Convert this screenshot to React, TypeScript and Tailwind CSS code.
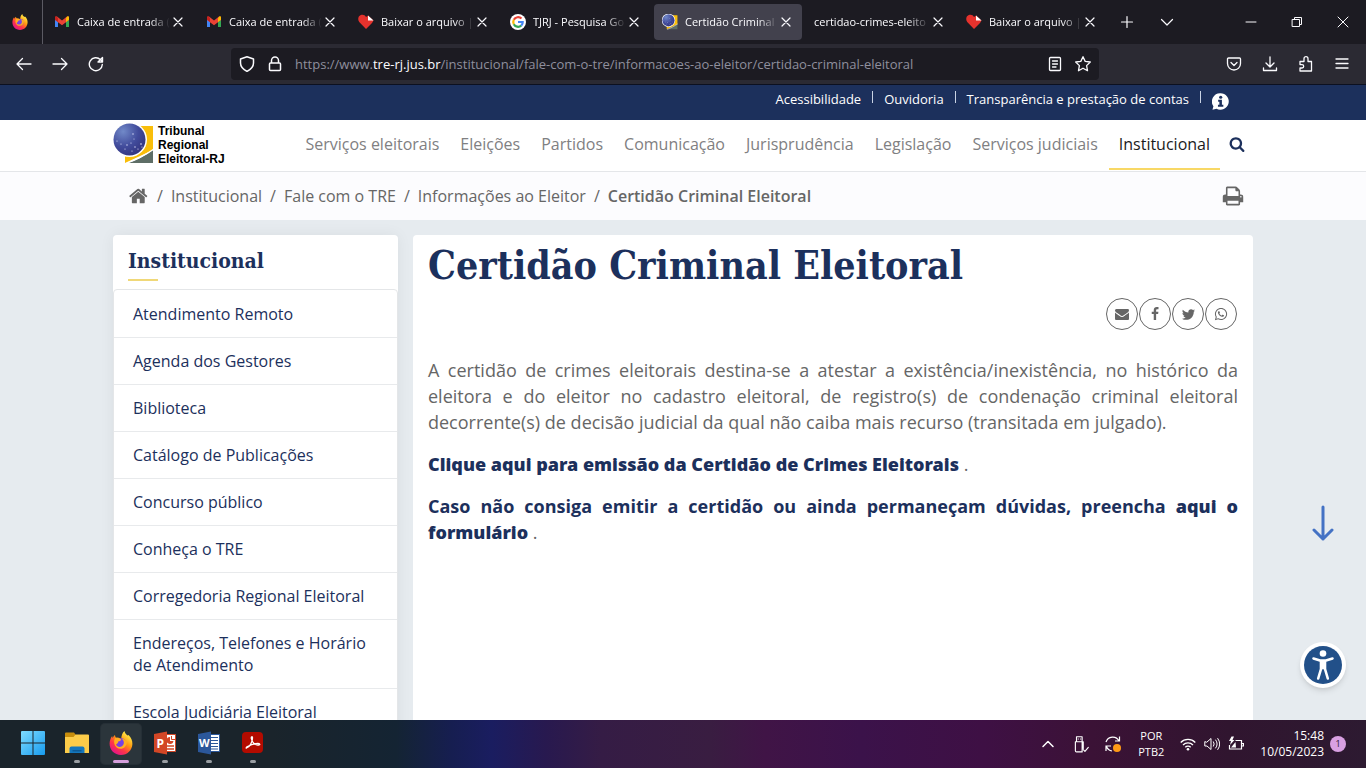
import React from "react";
import { FaWhatsapp } from "react-icons/fa";

const gmail = (
  <svg viewBox="0 0 16 12" className="h-3 w-4 shrink-0">
    <path d="M1 2v9h3V5z" fill="#4285f4" />
    <path d="M12 5v6h3V2z" fill="#34a853" />
    <path d="M1 1v3l7 5.2L15 4V1l-2-.4L8 4.6 3 .6z" fill="#ea4335" />
    <path d="M12 2.2V6l3-2.2V1.4C15 .4 13.800 0 13 .8z" fill="#fbbc04" />
    <path d="M4 2.200V6L1 3.800V1.400C1 .4 2.200 0 3 .8z" fill="#c5221f" />
  </svg>
);
const heart = (
  <svg viewBox="0 0 16 16" className="h-4 w-4 shrink-0">
    <path d="M8 15 1.200 8C-.5 5.500 0 2 2.800 1 5 .2 7 1 8 3l2-1.500 5.500 5L14 9z" fill="#e5322d" />
    <path d="M10 1.500v5h5.500z" fill="#fff" />
  </svg>
);
const google = (
  <svg viewBox="0 0 16 16" className="h-4 w-4 shrink-0">
    <circle cx="8" cy="8" r="8" fill="#fff" />
    <g fill="none" strokeWidth="2.200">
      <path d="M11.500 4.600A4.800 4.800 0 0 0 3.800 5.800" stroke="#ea4335" />
      <path d="M3.800 5.800a4.800 4.800 0 0 0 0 4.400" stroke="#fbbc04" />
      <path d="M3.800 10.200a4.800 4.800 0 0 0 7.400 1.400" stroke="#34a853" />
      <path d="M11.200 11.600A4.500 4.500 0 0 0 12.700 8H8" stroke="#4285f4" />
    </g>
  </svg>
);

function CourtMark({ className }: { className: string }) {
  return (
    <svg viewBox="0 0 41 42" className={className}>
      <defs>
        <radialGradient id="globe" cx=".3" cy=".25" r=".8">
          <stop offset="0" stopColor="#7189c8" />
          <stop offset=".6" stopColor="#414b9b" />
          <stop offset="1" stopColor="#343681" />
        </radialGradient>
      </defs>
      <path d="M12 3h28v24L12 40z" fill="#f9be0a" />
      <path d="M40 27v13H15q13-4 25-13z" fill="#5e6e66" />
      <path d="M13 40.500Q28 35 41 26" stroke="#fff" strokeWidth="1.300" fill="none" />
      <circle cx="16.500" cy="16.500" r="17.500" fill="#fff" />
      <circle cx="16.500" cy="16.500" r="16" fill="url(#globe)" />
      <g fill="#dfe4ff">
        <circle cx="20" cy="11" r=".7" /><circle cx="8" cy="21" r=".6" /><circle cx="14" cy="22" r=".7" />
        <circle cx="18" cy="20" r=".6" /><circle cx="22" cy="24" r=".7" /><circle cx="28" cy="21" r=".8" />
        <circle cx="25" cy="26" r=".6" /><circle cx="12" cy="26" r=".6" /><circle cx="19" cy="28" r=".6" />
        <circle cx="29" cy="24" r=".6" /><circle cx="4" cy="18" r=".6" /><circle cx="21" cy="16" r=".5" />
      </g>
    </svg>
  );
}

function Firefox({ className, id }: { className: string; id: string }) {
  return (
    <svg viewBox="0 0 24 24" className={className}>
      <defs>
        <linearGradient id={id} x1=".85" y1=".1" x2=".25" y2=".95">
          <stop offset="0" stopColor="#fff44f" />
          <stop offset=".4" stopColor="#ff980e" />
          <stop offset=".7" stopColor="#ff3647" />
          <stop offset="1" stopColor="#e31587" />
        </linearGradient>
      </defs>
      <path d="M15.500 0c.2 2 1.500 3.200 3 4.500l1-.6c2.700 2.500 4 5.700 3.900 9C23.200 19 18.300 24 12 24 5.500 24 .5 19 .6 12.500.7 9.500 1.600 7 3.200 5c0 .8.200 1.400.5 2C4.300 5.500 5.200 4.500 6 4c0 1 .5 2.200 1.200 2.800 2-.3 4 .2 5 1.200.2-3.200 1-6.200 3.300-8z" fill={`url(#${id})`} />
      <circle cx="12.200" cy="12.200" r="5" fill="#7542e5" />
      <path d="M6 7c2-.6 4.600-.1 6.200 1.400-.3 1.200-1.300 1.700-2.800 1.900-.3 1.800-1.200 2.600-2.600 3.200C8 16 11 16.500 13 15.200c3-2 2-6-.2-7.400 2.400.2 4.200 1.400 5.200 3.200-.2 4-3 7-7 6.800C6.500 17.500 3.600 12 6 7z" fill="#ffae1e" />
    </svg>
  );
}

type Tab = { title: string; icon?: React.ReactNode; active?: boolean };
const tabs: Tab[] = [
  { title: "Caixa de entrada (", icon: gmail },
  { title: "Caixa de entrada (", icon: gmail },
  { title: "Baixar o arquivo | i", icon: heart },
  { title: "TJRJ - Pesquisa Go", icon: google },
  { title: "Certidão Criminal", icon: <CourtMark className="h-4 w-4 shrink-0" />, active: true },
  { title: "certidao-crimes-eleito" },
  { title: "Baixar o arquivo | i", icon: heart },
];

function Line({ d, className = "h-4 w-4", width = 1.5 }: { d: string; className?: string; width?: number }) {
  return (
    <svg viewBox="0 0 16 16" className={className} fill="none" stroke="currentColor" strokeWidth={width} strokeLinecap="round" strokeLinejoin="round">
      <path d={d} />
    </svg>
  );
}

function Solid({ d, className }: { d: string; className: string }) {
  return (
    <svg viewBox="0 0 1792 1792" className={className} fill="currentColor">
      <path d={d} />
    </svg>
  );
}

const glyphs = {
  home: "M1408 992v480q0 26-19 45t-45 19h-384v-384h-256v384h-384q-26 0-45-19t-19-45v-480q0-1 .5-3t.5-3l575-474 575 474q1 2 1 6zm223-69l-62 74q-8 9-21 11h-3q-13 0-21-7l-692-577-692 577q-12 8-24 7-13-2-21-11l-62-74q-8-10-7-23.500t11-21.500l719-599q32-26 76-26t76 26l244 204v-195q0-14 9-23t23-9h192q14 0 23 9t9 23v408l219 182q10 8 11 21.500t-7 23.500z",
  print: "M448 1536h896v-256h-896v256zm0-640h896v-384h-160q-40 0-68-28t-28-68v-160h-640v640zm1152 64q0-26-19-45t-45-19-45 19-19 45 19 45 45 19 45-19 19-45zm128 0v416q0 13-9.500 22.500t-22.500 9.500h-224v160q0 40-28 68t-68 28h-960q-40 0-68-28t-28-68v-160h-224q-13 0-22.500-9.500t-9.500-22.500v-416q0-79 56.500-135.500t135.500-56.500h64v-544q0-40 28-68t68-28h672q40 0 88 20t76 48l152 152q28 28 48 76t20 88v256h64q79 0 135.500 56.500t56.500 135.500z",
  search: "M1216 832q0-185-131.500-316.500t-316.500-131.500-316.500 131.500-131.500 316.500 131.500 316.500 316.500 131.500 316.500-131.500 131.500-316.500zm512 832q0 52-38 90t-90 38q-54 0-90-38l-343-342q-179 124-399 124-143 0-273.500-55.500t-225-150-150-225-55.500-273.500 55.500-273.500 150-225 225-150 273.500-55.500 273.500 55.500 225 150 150 225 55.500 273.500q0 220-124 399l343 343q37 37 37 90z",
  facebook: "M1343 12v264h-157q-86 0-116 36t-30 108v189h293l-39 296h-254v759h-306v-759h-255v-296h255v-218q0-186 104-288.500t277-102.500q147 0 228 12z",
  twitter: "M1684 408q-67 98-162 167 1 14 1 42 0 130-38 259.500t-115.500 248.500-184.500 210.500-258 146-323 54.500q-271 0-496-145 35 4 78 4 225 0 401-138-105-2-188-64.500t-114-159.500q33 5 61 5 43 0 85-11-112-23-185.500-111.500t-73.500-205.500v-4q68 38 146 41-66-44-105-115t-39-154q0-88 44-163 121 149 294.500 238.500t371.500 99.500q-8-38-8-74 0-134 94.500-228.500t228.500-94.500q140 0 236 102 109-21 205-78-37 115-142 178 93-10 186-50z",
  envelope: "M1792 710v794q0 66-47 113t-113 47h-1472q-66 0-113-47t-47-113v-794q44 49 101 87 362 246 497 345 57 42 92.500 65.500t94.500 48 110 24.500h2q51 0 110-24.500t94.500-48 92.500-65.500q170-123 498-345 57-39 100-87zm0-294q0 79-49 151t-122 123q-376 261-468 325-10 7-42.500 31t-54 38.500-52 32.500-57.500 27-50 9h-2q-23 0-50-9t-57.500-27-52-32.500-54-38.500-42.500-31q-91-64-262-182.500t-205-142.500q-62-42-117-115.500t-55-136.500q0-78 41.500-130t118.500-52h1472q65 0 112.500 47t47.500 113z",
};

function Browser() {
  return (
    <header className="shrink-0 bg-[#2b2a33] font-['Open_Sans',sans-serif] text-[#fbfbfe]">
      <div className="flex h-11 items-center bg-[#1c1b22]">
        <div className="flex h-full w-[43px] items-center justify-center border-r border-[#5b5a63] pr-0.5">
          <Firefox className="h-4 w-4" id="firefoxTab" />
        </div>
        <div role="tablist" className="flex gap-1 pl-[3px]">
          {tabs.map((t, i) => (
            <div key={i} role="tab" aria-selected={!!t.active} className={`flex h-9 w-[148px] items-center rounded pr-2 pl-2 ${t.active ? "bg-[#42414d]" : ""}`}>
              {t.icon}
              <span className={`min-w-0 flex-1 text-[11px] whitespace-nowrap mask-r-from-80% ${t.icon ? "pl-[7px]" : ""}`}>{t.title}</span>
              <button aria-label="Fechar aba">
                <svg viewBox="0 0 12 12" className="h-3 w-4" fill="none" stroke="currentColor" strokeWidth="1.200" strokeLinecap="round"><path d="M2 2l8 8M10 2l-8 8" /></svg>
              </button>
            </div>
          ))}
        </div>
        <div className="flex gap-6 pl-[13px]">
          <button aria-label="Nova aba"><Line d="M8 2.500v11M2.500 8h11" width={1.2} /></button>
          <button aria-label="Listar abas"><Line d="M2.500 5.500 8 11l5.500-5.500" width={1.2} /></button>
        </div>
        <div className="ml-auto flex gap-[30px] pr-[15px]">
          <button aria-label="Minimizar"><Line d="M3 8h10" width={1} /></button>
          <button aria-label="Restaurar"><Line d="M3.500 5.500h7v7h-7zM5.500 5V3.500h7v7H11" width={1} /></button>
          <button aria-label="Fechar"><Line d="M3 3l10 10M13 3 3 13" width={1} /></button>
        </div>
      </div>
      <div className="flex h-10 items-center">
        <div className="flex w-[231px] shrink-0 gap-5 pl-4">
          <button aria-label="Voltar"><Line d="M15 8H1M6.500 2.500 1 8l5.500 5.500" width={1.3} /></button>
          <button aria-label="Avançar"><Line d="M1 8h14M9.500 2.500 15 8l-5.500 5.500" width={1.3} /></button>
          <button aria-label="Recarregar"><Line d="M14.300 8.500A6.500 6.500 0 1 1 12.500 3.700L14 5M14.500 1.500V6H10z" width={1.4} /></button>
        </div>
        <div className="mr-[127px] flex h-8 flex-1 items-center gap-3 rounded bg-[#1c1b22] px-2">
          <Line d="M8 .8 14.500 3v4c0 4-3 6.600-6.500 8.400C4.500 13.600 1.500 11 1.500 7V3z" />
          <Line d="M3.500 7h9a1 1 0 0 1 1 1v5.500a1 1 0 0 1-1 1h-9a1 1 0 0 1-1-1V8a1 1 0 0 1 1-1zM4.500 7V4.500a3.500 3.500 0 0 1 7 0V7" />
          <div className="flex-1 pt-0.5 text-[13px] whitespace-nowrap text-[#8f8f9d]">
            https://www.<span className="text-[#fbfbfe]">tre-rj.jus.br</span>/institucional/fale-com-o-tre/informacoes-ao-eleitor/certidao-criminal-eleitoral
          </div>
          <button aria-label="Modo de leitura"><Line d="M3.500 1.500h9a1 1 0 0 1 1 1v11a1 1 0 0 1-1 1h-9a1 1 0 0 1-1-1v-11a1 1 0 0 1 1-1zM5.500 5h5M5.500 8h5M5.500 11H9" width={1.3} /></button>
          <button aria-label="Favoritar"><Line d="m8 .7 2.200 4.700 5.100.6-3.700 3.600.9 5.100L8 12.200l-4.500 2.500.9-5.100L.7 6l5.100-.6z" width={1.3} /></button>
        </div>
        <div className="flex gap-5 pr-4">
          <button aria-label="Pocket"><Line d="M2.500 2h11a1 1 0 0 1 1 1v4.500a6.500 6.500 0 0 1-13 0V3a1 1 0 0 1 1-1zM5 6.500l3 3 3-3" width={1.3} /></button>
          <button aria-label="Downloads"><Line d="M8 .8V11M4 7l4 4 4-4M1.500 12v2.500h13V12" width={1.3} /></button>
          <button aria-label="Extensões"><Line d="M2 5.500h4V2.700a2 2 0 0 1 4 0v2.800h3.500v9.500H2v-3h2a1.700 1.700 0 0 0 0-3.400H2z" width={1.3} /></button>
          <button aria-label="Menu"><Line d="M2 3h12M2 7.500h12M2 12h12" width={1.3} /></button>
        </div>
      </div>
    </header>
  );
}

const menu = ["Serviços eleitorais", "Eleições", "Partidos", "Comunicação", "Jurisprudência", "Legislação", "Serviços judiciais"];
const crumbs = ["Institucional", "Fale com o TRE", "Informações ao Eleitor"];
const side = ["Atendimento Remoto", "Agenda dos Gestores", "Biblioteca", "Catálogo de Publicações", "Concurso público", "Conheça o TRE", "Corregedoria Regional Eleitoral", "Endereços, Telefones e Horário de Atendimento", "Escola Judiciária Eleitoral"];

function Share({ label, children }: { label: string; children: React.ReactNode }) {
  return (
    <a href="#" aria-label={label} className="flex h-8 w-8 items-center justify-center rounded-full border border-[#666]">{children}</a>
  );
}

function Site() {
  return (
    <div className="relative flex min-h-0 flex-1 flex-col overflow-hidden bg-[#e6ebef] font-['Open_Sans',sans-serif] text-[#666]">
      <div className="h-9 shrink-0 border-t border-[#0c1020] bg-[#1c305c] text-[13px] text-white">
        <div className="mx-auto flex max-w-[1140px] items-start justify-end gap-[11px] pt-1 pr-6 leading-5">
          <a href="#">Acessibilidade</a>
          <span className="mt-0.5 h-3 w-px bg-[#c9d3e4]" />
          <a href="#">Ouvidoria</a>
          <span className="mt-0.5 h-3 w-px bg-[#c9d3e4]" />
          <a href="#">Transparência e prestação de contas</a>
          <span className="mt-0.5 h-3 w-px bg-[#c9d3e4]" />
          <a href="#" aria-label="Acesso à informação" className="pt-1">
            <svg viewBox="0 0 18 18" className="h-[17px] w-[17px]">
              <path d="M9 .3a8.700 8.700 0 1 1-4.200 16.300L.5 17.700 1.500 14A8.700 8.700 0 0 1 9 .3z" fill="#fff" />
              <path d="M6.500 7.200h4v5.300H12v2H6.300v-2h1.500V9.200H6.500z" fill="#1c305c" />
              <circle cx="9.200" cy="4.500" r="1.700" fill="#1c305c" />
            </svg>
          </a>
        </div>
      </div>
      <div className="h-[52px] shrink-0 border-b border-[#e4e6e9] bg-white">
        <div className="mx-auto flex h-full max-w-[1140px] justify-between">
          <a href="#" className="flex items-start gap-1 pt-[3px] font-['Liberation_Sans',sans-serif] text-xs leading-[14px] font-bold text-black">
            <CourtMark className="h-[42px] w-[41px]" />
            <span className="pt-px">Tribunal<br />Regional<br />Eleitoral-RJ</span>
          </a>
          <nav className="flex items-start gap-px text-base leading-6 text-[#7f8082]">
            {menu.map((m) => <a key={m} href="#" className="px-[10px] pt-3">{m}</a>)}
            <a href="#" className="h-[50px] border-b-2 border-[#f8d865] px-[10px] pt-3 text-[#1b1b1b]">Institucional</a>
            <button aria-label="Pesquisar" className="px-2 pt-4 text-[#1c305c]"><Solid d={glyphs.search} className="h-4 w-4" /></button>
          </nav>
        </div>
      </div>
      <div className="h-12 shrink-0 bg-[#fcfcfe]">
        <div className="mx-auto flex h-full max-w-[1140px] items-center justify-between px-[9px]">
          <nav className="flex items-center gap-2 pl-[7px] text-base">
            <a href="#" aria-label="Início"><Solid d={glyphs.home} className="h-5 w-5" /></a>
            {crumbs.map((c) => <React.Fragment key={c}><span>/</span><a href="#">{c}</a></React.Fragment>)}
            <span>/</span>
            <span className="font-semibold">Certidão Criminal Eleitoral</span>
          </nav>
          <button aria-label="Imprimir"><Solid d={glyphs.print} className="h-[22px] w-[22px]" /></button>
        </div>
      </div>
      <div className="mx-auto flex w-full max-w-[1140px] flex-1 gap-[15px] pt-[15px]">
        <aside className="w-[285px] shrink-0 rounded-t bg-white text-[#1c305c] shadow-[0_0_15px_rgba(0,0,0,0.06)]">
          <div className="h-[54px] px-[15px] pt-2">
            <h2 className="font-['DejaVu_Serif_Condensed','DejaVu_Serif',serif] text-[21px] leading-9 font-bold">Institucional</h2>
            <span className="block h-0.5 w-[30px] bg-[#f0d878]" />
          </div>
          <ul className="rounded-t border border-[#e4e6e8] pt-px">
            {side.map((s) => (
              <li key={s} className="border-b border-[#e8eaec] px-[19px] py-3 text-base leading-[22px] last:border-0">
                <a href="#">{s}</a>
              </li>
            ))}
          </ul>
        </aside>
        <main className="min-w-0 flex-1 rounded-t bg-white px-[15px] pt-[7px]">
          <h1 className="font-['DejaVu_Serif_Condensed','DejaVu_Serif',serif] text-[39px] leading-[46px] font-bold whitespace-nowrap text-[#1c305c]">Certidão Criminal Eleitoral</h1>
          <div className="flex justify-end gap-px pt-[10px] pr-px">
            <Share label="E-mail"><Solid d={glyphs.envelope} className="h-3.5 w-3.5" /></Share>
            <Share label="Facebook"><Solid d={glyphs.facebook} className="h-3.5 w-3.5" /></Share>
            <Share label="Twitter"><Solid d={glyphs.twitter} className="h-[15px] w-[15px]" /></Share>
            <Share label="WhatsApp"><FaWhatsapp className="h-3.5 w-3.5" /></Share>
          </div>
          <div className="flex flex-col gap-4 pt-[27px] text-justify text-[18px] leading-[26px]">
            <p>A certidão de crimes eleitorais destina-se a atestar a existência/inexistência, no histórico da eleitora e do eleitor no cadastro eleitoral, de registro(s) de condenação criminal eleitoral decorrente(s) de decisão judicial da qual não caiba mais recurso (transitada em julgado).</p>
            <p><a href="#" className="font-['Noto_Sans',sans-serif] font-black text-[#1c305c]">Clique aqui para emissão da Certidão de Crimes Eleitorais</a> .</p>
            <p><strong className="font-bold text-[#1c305c]">Caso não consiga emitir a certidão ou ainda permaneçam dúvidas, preencha <a href="#" className="font-['Noto_Sans',sans-serif] font-black">aqui o formulário</a></strong> .</p>
          </div>
        </main>
      </div>
      <button aria-label="Rolar para baixo" className="absolute right-8 bottom-[179px] text-[#4472c4]">
        <svg viewBox="0 0 22 36" className="h-9 w-[22px]" fill="none" stroke="currentColor" strokeWidth="3" strokeLinecap="round" strokeLinejoin="round"><path d="M11 2v32M2 25l9 9 9-9" /></svg>
      </button>
      <button aria-label="Menu de acessibilidade" className="absolute right-5 bottom-8 rounded-full bg-white p-1 shadow-md">
        <svg viewBox="0 0 38 38" className="h-[38px] w-[38px]">
          <circle cx="19" cy="19" r="19" fill="#225089" />
          <circle cx="19" cy="7.500" r="3.300" fill="#fff" />
          <path d="M9.500 12.500 16 14.500h6l6.500-2M17 15v8l-2.800 9.500M21 15v8l2.800 9.500" stroke="#fff" strokeWidth="2.600" strokeLinecap="round" strokeLinejoin="round" fill="none" />
          <path d="M16 14h6v8l-1 2-2-1-2 1-1-2z" fill="#fff" />
        </svg>
      </button>
    </div>
  );
}

function Dock({ label, active, idle, children }: { label: string; active?: boolean; idle?: boolean; children: React.ReactNode }) {
  return (
    <button aria-label={label} className={`flex h-10 w-10 flex-col items-center justify-end gap-[5px] rounded pb-px ${active ? "bg-white/8 ring-1 ring-white/5" : ""}`}>
      {children}
      <span className={`h-[3px] rounded-full ${active ? "w-4 bg-[#d59fdc]" : idle ? "w-1.5" : "w-1.5 bg-[#9a9fa3]"}`} />
    </button>
  );
}

function Taskbar() {
  return (
    <footer className="flex h-12 shrink-0 items-center justify-between bg-[linear-gradient(90deg,#1a242b_0%,#1a242b_20%,#142433_29%,#161e50_33%,#1a1d60_36%,#28194f_40%,#351c45_44%,#391d41_52%,#401446_56%,#3b124a_63%,#3e1044_72%,#3b1236_80%,#30152f_90%,#2d1a31_100%)] font-['Open_Sans',sans-serif] text-xs text-white">
      <div className="flex gap-1 pl-[13px]">
        <Dock label="Iniciar" idle>
          <svg viewBox="0 0 24 24" className="h-6 w-6"><defs><linearGradient id="win" x2="1" y2="1"><stop stopColor="#7fdcff" /><stop offset="1" stopColor="#179bee" /></linearGradient></defs><path d="M1 0h10.500v11.500H0V1a1 1 0 0 1 1-1zM12.500 0H23a1 1 0 0 1 1 1v10.500H12.500zM0 12.500h11.500V24H1a1 1 0 0 1-1-1zM12.500 12.500H24V23a1 1 0 0 1-1 1H12.500z" fill="url(#win)" /></svg>
        </Dock>
        <Dock label="Explorador de Arquivos">
          <svg viewBox="0 0 24 24" className="h-6 w-6"><path d="M0 2.500a1 1 0 0 1 1-1h8l1.500 2v4H0z" fill="#c78d0c" /><path d="M0 6h8.500l2-2.500H23a1 1 0 0 1 1 1V22H0z" fill="#fccc49" /><path d="M4.500 22v-4.500a2 2 0 0 1 2-2h11a2 2 0 0 1 2 2V22z" fill="#1477bd" /><path d="M7.500 19h9v1.500h-9z" fill="#0c5a96" /></svg>
        </Dock>
        <Dock label="Firefox" active><Firefox className="h-6 w-6" id="firefoxDock" /></Dock>
        <Dock label="PowerPoint">
          <svg viewBox="0 0 24 24" className="h-6 w-6"><path d="M12 3.500h10.500v17H12z" fill="#fff" stroke="#d24726" /><path d="M14 15h7M14 18h7" stroke="#d24726" strokeWidth="1.500" /><path d="M17 6a3.500 3.500 0 1 0 3.500 4H17z" fill="#d24726" /><path d="M18.500 5v3.500H22" fill="none" stroke="#d24726" /><path d="M1 3 14 .5v23L1 21z" fill="#d24726" /><text x="3.500" y="16.500" fontSize="12" fontWeight="700" fill="#fff">P</text></svg>
        </Dock>
        <Dock label="Word">
          <svg viewBox="0 0 24 24" className="h-6 w-6"><path d="M12 3.500h10.500v17H12z" fill="#fff" stroke="#2b579a" /><path d="M14 6.500h7M14 9.500h7M14 12.500h7M14 15.500h7M14 18h7" stroke="#2b579a" /><path d="M1 3 14 .5v23L1 21z" fill="#2b579a" /><text x="2" y="16" fontSize="11" fontWeight="700" fill="#fff">W</text></svg>
        </Dock>
        <Dock label="Adobe Acrobat">
          <svg viewBox="0 0 24 24" className="h-6 w-6"><rect x="1" y="1" width="21" height="21" rx="4" fill="#b30b00" /><path d="M5.500 17c3-1 6-5.500 6-10 0-2-1.500-1.500-1.200.5.600 3.500 3.500 7 7.200 6.500 2 0 1.500-1.500-.8-1.500-3.500 0-7.500 1.500-10.700 3.300-1 .8-1 1.700-.5 1.200z" fill="none" stroke="#fff" strokeWidth="1.300" /></svg>
        </Dock>
      </div>
      <div className="flex items-center pr-5">
        <Line d="M3 10.500 8 5.500l5 5" className="mr-4 h-4 w-4" />
        <Line d="M3 6h6v9H4a1 1 0 0 1-1-1zM4 6V1.500h5V6h1v6M5.500 3.500h.2M7.500 3.500h.2M10 13l1.500 1.500 3-3.500" className="mr-3.5 h-[18px] w-[18px]" width={1} />
        <svg viewBox="0 0 18 18" className="mr-4 h-[18px] w-[18px]" fill="none" stroke="currentColor" strokeWidth="1.200"><path d="M2 7a7 7 0 0 1 13-1M15.500 1.500V6H11M7 11H2v5M2.500 11.500A7 7 0 0 0 8 16" /><circle cx="13" cy="13" r="4" fill="#ff9a16" stroke="none" /></svg>
        <div className="mr-4 text-center text-[11px] leading-4">POR<br />PTB2</div>
        <svg viewBox="0 0 16 16" className="mr-2 h-4 w-4" fill="none" stroke="currentColor" strokeWidth="1.300"><path d="M.7 6.500a10.300 10.300 0 0 1 14.600 0M3 9a7 7 0 0 1 10 0M5.300 11.300a3.800 3.800 0 0 1 5.400 0" /><circle cx="8" cy="13.300" r="1.300" fill="currentColor" stroke="none" /></svg>
        <Line d="M.8 6v4H3l4 3.500v-11L3 6zM9.500 5.800q1.500 2.200 0 4.400M11.700 4q3 4 0 8M13.800 2.500q4 5.500 0 11" className="mr-2 h-4 w-4" width={1} />
        <svg viewBox="0 0 16 16" className="mr-4 h-4 w-4" fill="none" stroke="currentColor" strokeWidth="1.200"><path d="M7.500 4.500h6v8.500H1.500V9M14 7.500h1.500V10H14" /><path d="M8 11.500h-5L7.500 6z" fill="currentColor" stroke="none" /><path d="M3.500.5 1 5h2L2 9l4.500-5h-2L6 .5z" fill="currentColor" stroke="none" /></svg>
        <div className="mr-1.5 text-right text-xs leading-4">15:48<br />10/05/2023</div>
        <span className="flex h-4 w-4 items-center justify-center rounded-full bg-[#d9a0e2] text-[9px] text-[#30152f]">1</span>
      </div>
    </footer>
  );
}

export default function App() {
  return (
    <div className="flex h-screen flex-col overflow-hidden">
      <Browser />
      <Site />
      <Taskbar />
    </div>
  );
}
